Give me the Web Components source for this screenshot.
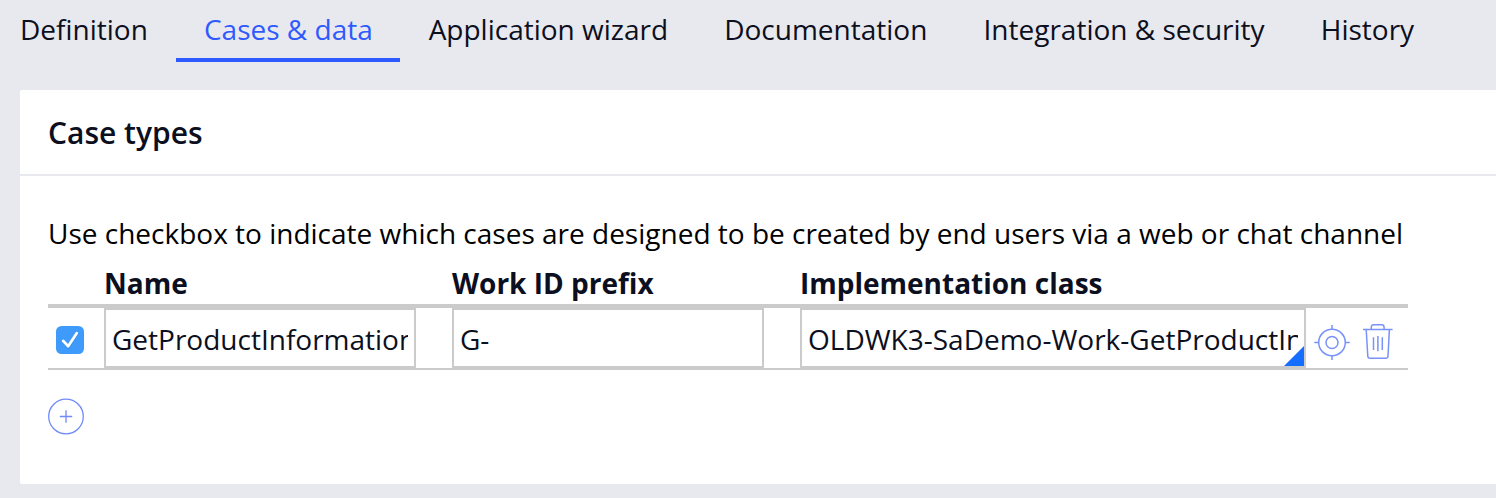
<!DOCTYPE html>
<html lang="en">
<head>
<meta charset="utf-8">
<title>Cases &amp; data</title>
<style>
html,body{margin:0;height:100%;overflow:hidden}
body{background:#e8e9ee;color:#0c0f20;font:28px/38px "Open Sans","Noto Sans",sans-serif}
</style>
</head>
<body>
<app-page></app-page>
<script>
const define = (name, html) => customElements.define(name, class extends HTMLElement {
  constructor() {
    super();
    this.attachShadow({mode: 'open'}).innerHTML = html;
  }
});

define('tab-item', `<style>
:host{display:block;box-sizing:border-box;height:62px;padding:10px 28px 0;border-bottom:4px solid transparent;white-space:nowrap;flex:none}
:host([selected]){width:224px;margin-right:.5px;color:#2f5afd;border-color:#2f5afd}
</style><slot></slot>`);

define('tab-bar', `<style>
:host{display:flex;gap:.15px;height:62px;margin-left:-8px}
</style><slot></slot>`);

define('content-card', `<style>
:host{display:block;box-sizing:border-box;height:394px;margin:28px 0 0 20px;background:#fff;border-radius:2px 0 0 2px}
header{box-sizing:border-box;height:86px;padding:24px 28px 0;border-bottom:2px solid #e8e9ee;font-weight:600;font-size:30px}
section{padding:38px 28px 0}
</style><header><slot name="title"></slot></header><section><slot></slot></section>`);

define('text-field', `<style>
:host{display:block;position:relative;box-sizing:border-box;height:60px;border:2px solid #cbcbcb;padding:10px 6px 0;background:#fff}
span{display:block;overflow:hidden;white-space:nowrap}
svg{display:none;position:absolute;right:0;bottom:0}
:host([lookup]) svg{display:block}
</style><span><slot></slot></span><svg width="20" height="20"><path d="M20 0V20H0Z" fill="#146eff"/></svg>`);

define('check-box', `<style>
:host{display:block;width:28px;height:28px}
svg{display:block}
</style><svg width="28" height="28" fill="none"><rect width="28" height="28" rx="5.5" fill="#3f9bfb"/><path d="M7.2 15.7l5 5.4L20.7 7.8" stroke="#2583e4" stroke-width="3" stroke-linecap="round" stroke-linejoin="round"/><path d="M7.2 15l5 5.3L20.7 7.2" stroke="#fff" stroke-width="2.8" stroke-linecap="round" stroke-linejoin="round"/></svg>`);

define('target-icon', `<style>:host{display:block}svg{display:block}</style>
<svg width="36" height="36" fill="none" stroke="#7892fa" stroke-width="1.5"><circle cx="18" cy="18.5" r="13.3"/><circle cx="18" cy="18.5" r="6"/><path d="M18 1V5.5M18 31.5V36M.3 18.5H5M31 18.5h4.7"/></svg>`);

define('trash-icon', `<style>:host{display:block}svg{display:block}</style>
<svg width="30" height="36" fill="none" stroke="#7892fa" stroke-width="1.5"><path d="M0 5.4h29.6M3.2 5.6l1.6 26.6q.2 2 2.2 2h15.8q2 0 2.2-2L26.4 5.6M8.3 5.1V3Q8.4.8 10.6.8h8.2q2.2 0 2.3 2.3v2M10.5 13.3v12.7M14.9 12v15.2M19.3 13.3v12.7"/></svg>`);

define('add-button', `<style>:host{display:block}svg{display:block}</style>
<svg width="36" height="37" fill="none" stroke="#6f8bfb" stroke-width="1.3"><circle cx="18" cy="18.5" r="17.3"/><path d="M18 12.3v12.4M11.8 18.5h12.4"/></svg>`);

define('case-table', `<style>
:host{display:block;width:1360px}
.head,.row{display:grid;grid-template-columns:56px 348px 348px 506px 102px}
.head{box-sizing:border-box;height:55px;padding-top:11px;border-bottom:4px solid #cbcbcb;font-weight:700;white-space:nowrap}
.row{height:60px;border-bottom:2px solid #cbcbcb}
.short{width:312px}
check-box{margin:18px 0 0 8px}
.actions{display:flex;gap:13px;padding:16px 0 0 8px}
add-button{margin-top:28px}
</style>
<div class="head"><span></span><span>Name</span><span>Work ID prefix</span><span>Implementation class</span></div>
<div class="row"><check-box></check-box><text-field class="short">GetProductInformation</text-field><text-field class="short">G-</text-field><text-field lookup>OLDWK3-SaDemo-Work-GetProductInformation</text-field><div class="actions"><target-icon></target-icon><trash-icon></trash-icon></div></div>
<add-button></add-button>`);

define('app-page', `<style>
:host{display:block}
p{margin:0 0 1px;color:#000;white-space:nowrap}
</style>
<tab-bar><tab-item>Definition</tab-item><tab-item selected>Cases &amp; data</tab-item><tab-item>Application wizard</tab-item><tab-item>Documentation</tab-item><tab-item>Integration &amp; security</tab-item><tab-item>History</tab-item></tab-bar>
<content-card><span slot="title">Case types</span><p>Use checkbox to indicate which cases are designed to be created by end users via a web or chat channel</p><case-table></case-table></content-card>`);
</script>
</body>
</html>
